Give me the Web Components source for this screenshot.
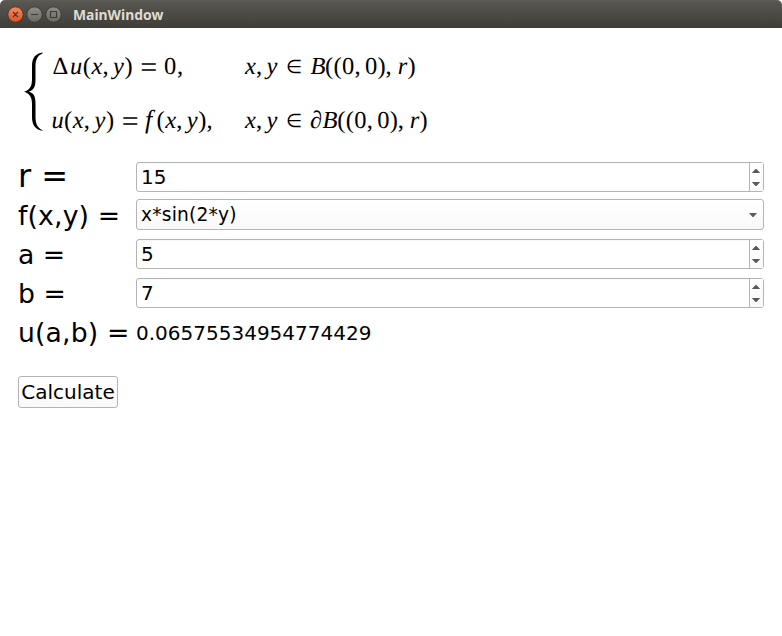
<!DOCTYPE html>
<html lang="en"><head><meta charset="utf-8"><title>MainWindow</title>
<style>html,body{margin:0;height:100%;background:#fff;overflow:hidden}</style></head>
<body>
<main-window></main-window>
<script>
class El extends HTMLElement{
  constructor(){super();this.attachShadow({mode:'open'});}
  connectedCallback(){this.shadowRoot.innerHTML=this.view();}
}
customElements.define('title-bar',class extends El{view(){return `
<style>
:host{display:flex;align-items:center;height:28px;box-sizing:border-box;padding-left:6px;background:linear-gradient(#5d5c55,#56554e 3px,#3e3d39);border-radius:5px 5px 0 0}
svg{display:block;flex:none}
span{margin-left:11px;font:bold 13.9px/28px "Noto Sans",sans-serif;color:#dfdbd2;padding-top:1px;height:27px}
</style>
<svg width="56" height="28" viewBox="0 0 56 28" fill="none">
<defs><linearGradient id="o" x2="0" y2="1"><stop stop-color="#f58762"/><stop offset="1" stop-color="#e2521f"/></linearGradient>
<linearGradient id="g" x2="0" y2="1"><stop stop-color="#8f8e87"/><stop offset="1" stop-color="#6b6a64"/></linearGradient></defs>
<circle cx="9.5" cy="14.5" r="7.7" fill="url(#o)" stroke="#393834" stroke-width=".9"/>
<circle cx="28.5" cy="14.5" r="7.7" fill="url(#g)" stroke="#393834" stroke-width=".9"/>
<circle cx="47.5" cy="14.5" r="7.7" fill="url(#g)" stroke="#393834" stroke-width=".9"/>
<path d="M7 12l5 5M12 12l-5 5M25 14.5h7M44.500 11.500h6v6h-6z" stroke="#3c3b37" stroke-width="1.2"/>
</svg><span><slot></slot></span>`}});
customElements.define('math-system',class extends El{view(){return `
<style>:host{display:block;height:110px}svg{display:block}
text{font:24.5px "Liberation Serif",serif;fill:#000;text-rendering:geometricPrecision}.i{font-style:italic}.e{font-size:30px}.m{font-size:18.5px}.f{font-size:26px}</style>
<svg width="440" height="110" viewBox="0 28 440 110">
<path d="M42.5 52.6C36 53.5 32 57.5 32 66V79C32 86 30 90 24 91.7C30 93.5 32 97.5 32 104V117C32 125.500 36 130 42.500 130.800V130.100C38.500 128.500 35.500 125 35.500 117V104C35.500 97 34.500 93 28.500 91.700C34.500 90 35.500 86 35.500 79V66C35.500 58.500 38.500 55 42.500 53.400Z"/>
<text y="74" x="52.500">Δ</text><text class="i" y="74" x="70">u</text><text y="74" x="82.700">(</text><text class="i" y="74" x="91.500">x</text><text y="74" x="102.500">,</text><text class="i" y="74" x="113">y</text><text y="74" x="124.500">)</text><text class="e" y="77" x="140.300">=</text><text y="74" x="164">0</text><text y="74" x="177">,</text>
<text class="i" y="74" x="245">x</text><text y="74" x="256">,</text><text class="i" y="74" x="266.500">y</text><text class="m" y="73" x="286">∈</text><text class="i" y="74" x="310.500">B</text><text y="74" x="325 333.500 342 354.500 365 377.500 385.500">((0,0),</text><text class="i" y="74" x="397.800">r</text><text y="74" x="407.500">)</text>
<text class="i" y="128" x="51.500">u</text><text y="128" x="64">(</text><text class="i" y="128" x="72.800">x</text><text y="128" x="83.800">,</text><text class="i" y="128" x="94.500">y</text><text y="128" x="106">)</text><text class="e" y="131" x="121.800">=</text><text class="i f" y="128" x="145">f</text><text y="128" x="156.500">(</text><text class="i" y="128" x="165.300">x</text><text y="128" x="176.300">,</text><text class="i" y="128" x="186.800">y</text><text y="128" x="198.300">)</text><text y="128" x="206.500">,</text>
<text class="i" y="128" x="245">x</text><text y="128" x="256">,</text><text class="i" y="128" x="266.500">y</text><text class="m" y="127" x="286">∈</text><text class="i" y="128" x="310">∂</text><text class="i" y="128" x="322.500">B</text><text y="128" x="337.300 345.800 354.300 366.800 377.300 389.800 397.800">((0,0),</text><text class="i" y="128" x="409.800">r</text><text y="128" x="419.500">)</text>
</svg>`}});
customElements.define('form-label',class extends El{view(){return `
<style>:host{display:block;white-space:nowrap;font-size:26.67px;line-height:31px}:host([large]){font-size:32px;line-height:29px}:host([wide]){letter-spacing:.16px}:host([combo]){line-height:33px}</style><slot></slot>`}});
const frame='box-sizing:border-box;border:1px solid #b4b4b4;border-radius:3px;';
customElements.define('spin-box',class extends El{view(){return `
<style>:host{display:flex;${frame}height:30px;font-size:20px;line-height:28px;background:linear-gradient(#f0f0f0,#fff 1px)}
.v{flex:1;padding-left:4px}.s{width:13px;border-left:1px solid #b4b4b4;background:linear-gradient(#fff,#f9f9f9)}svg{display:block}</style>
<div class="v"><slot></slot></div><div class="s"><svg width="13" height="28"><path d="M1.800 10h8.400L6.500 6h-1zM1.800 19h8.400L6.500 23h-1z" fill="#5a5a5a"/></svg></div>`}});
customElements.define('combo-box',class extends El{view(){return `
<style>:host{display:flex;align-items:center;${frame}height:31px;font-size:18.67px;letter-spacing:.19px;line-height:29px;background:linear-gradient(#fff,#f9f9f9)}
.v{flex:1;padding-left:4px}svg{margin:1px 6px 0 0}</style>
<div class="v"><slot></slot></div><svg width="8" height="4"><path d="M0 0h8L4.500 4h-1z" fill="#5a5a5a"/></svg>`}});
customElements.define('push-button',class extends El{view(){return `
<style>:host{display:block;${frame}width:100px;height:32px;font-size:20px;line-height:30px;text-align:center;white-space:nowrap;background:linear-gradient(#fff,#f9f9f9)}</style><slot></slot>`}});
customElements.define('main-window',class extends El{view(){return `
<style>:host{display:block;font-family:"DejaVu Sans",sans-serif;color:#000}
.content{padding:0 18px}math-system{margin-left:-18px}
.form{display:grid;grid-template-columns:110px 1fr;column-gap:8px;grid-template-rows:37px 40px 39px 39px 31px;align-items:start;margin-top:24px}
.out{font-size:20px;line-height:33px;height:31px}
push-button{margin-top:28px}</style>
<title-bar>MainWindow</title-bar>
<div class="content"><math-system></math-system>
<div class="form">
<form-label large>r =</form-label><spin-box>15</spin-box>
<form-label combo wide>f(x,y) =</form-label><combo-box>x*sin(2*y)</combo-box>
<form-label>a =</form-label><spin-box>5</spin-box>
<form-label>b =</form-label><spin-box>7</spin-box>
<form-label wide>u(a,b) =</form-label><div class="out">0.06575534954774429</div>
</div><push-button>Calculate</push-button></div>`}});
</script></body></html>
